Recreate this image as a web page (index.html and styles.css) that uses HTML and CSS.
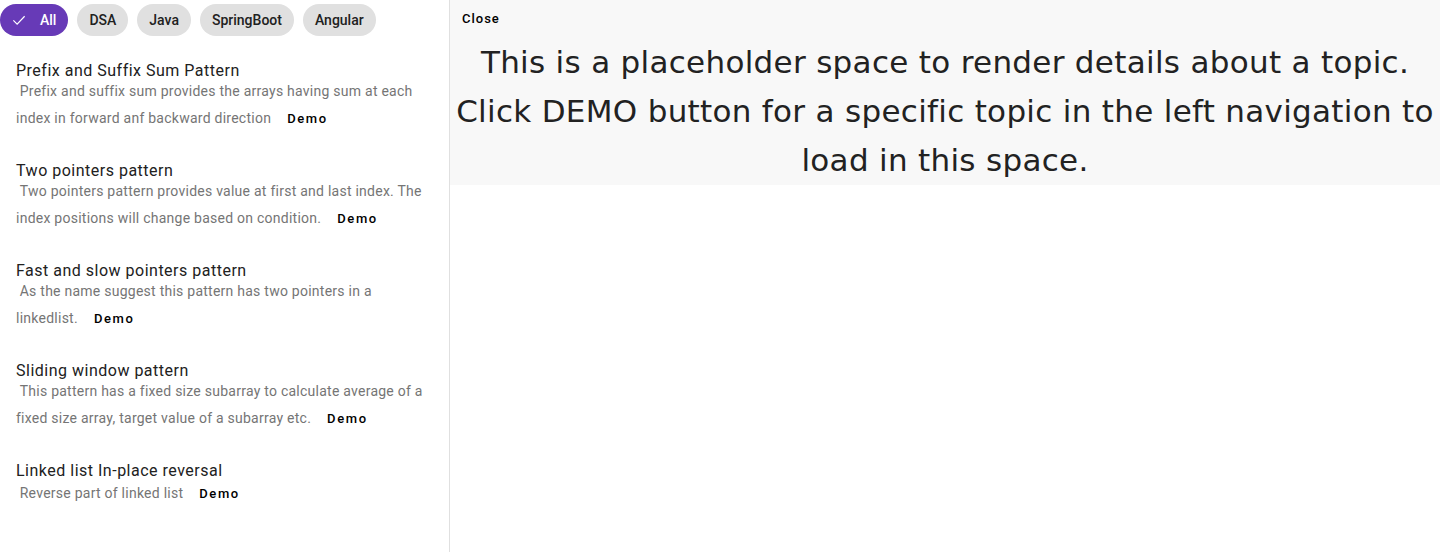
FILE: index.html
```html
<!DOCTYPE html>
<html>
<head>
<meta charset="utf-8">
<link rel="stylesheet" href="styles.css">
</head>
<body>
<div class="app">
  <aside class="sidebar">
    <div class="chips">
      <span class="chip chip-selected"><svg class="check" width="18" height="18" viewBox="0 0 24 24"><path d="M4.5 12.5l5 5 10-10.5" fill="none" stroke="#fff" stroke-width="1.6"/></svg>All</span>
      <span class="chip">DSA</span>
      <span class="chip">Java</span>
      <span class="chip">SpringBoot</span>
      <span class="chip">Angular</span>
    </div>
    <ul class="topics">
      <li class="topic">
        <div class="topic-title">Prefix and Suffix Sum Pattern</div>
        <div class="topic-desc"><span class="desc-text">&nbsp;Prefix and suffix sum provides the arrays having sum at each index in forward anf backward direction</span><button class="demo">Demo</button></div>
      </li>
      <li class="topic">
        <div class="topic-title">Two pointers pattern</div>
        <div class="topic-desc"><span class="desc-text">&nbsp;Two pointers pattern provides value at first and last index. The index positions will change based on condition.</span><button class="demo">Demo</button></div>
      </li>
      <li class="topic">
        <div class="topic-title">Fast and slow pointers pattern</div>
        <div class="topic-desc"><span class="desc-text">&nbsp;As the name suggest this pattern has two pointers in a linkedlist.</span><button class="demo">Demo</button></div>
      </li>
      <li class="topic">
        <div class="topic-title">Sliding window pattern</div>
        <div class="topic-desc"><span class="desc-text">&nbsp;This pattern has a fixed size subarray to calculate average of a fixed size array, target value of a subarray etc.</span><button class="demo">Demo</button></div>
      </li>
      <li class="topic">
        <div class="topic-title">Linked list In-place reversal</div>
        <div class="topic-desc topic-desc-single"><span class="desc-text">&nbsp;Reverse part of linked list</span><button class="demo">Demo</button></div>
      </li>
    </ul>
  </aside>
  <main class="detail">
    <div class="detail-box">
      <button class="close">Close</button>
      <p class="placeholder">This is a placeholder space to render details about a topic. Click DEMO button for a specific topic in the left navigation to load in this space.</p>
    </div>
  </main>
</div>
</body>
</html>
```
FILE: styles.css
```css
html, body {
  margin: 0;
  padding: 0;
  background: #fff;
  font-family: Roboto, "Liberation Sans", sans-serif;
}
.app {
  display: flex;
  height: 552px;
}
.sidebar {
  width: 449px;
  flex: none;
  border-right: 1px solid #e0e0e0;
  box-sizing: content-box;
}
.chips {
  display: flex;
  gap: 9px;
  padding: 4px 0;
}
.chip {
  display: inline-flex;
  align-items: center;
  height: 32px;
  padding: 0 12px;
  border-radius: 16px;
  background: #e0e0e0;
  color: #212121;
  font-size: 14px;
  font-weight: 500;
  box-sizing: border-box;
}
.chip-selected {
  background: #673ab7;
  color: #fff;
  padding-left: 10px;
}
.check {
  margin-right: 12px;
}
.topics {
  list-style: none;
  margin: 0;
  padding: 21px 16px 0 16px;
}
.topic {
  margin-bottom: 29px;
}
.topic-title {
  font-size: 16px;
  line-height: 20px;
  letter-spacing: 0.5px;
  color: #212121;
}
.topic-desc {
  margin-top: -3px;
  font-size: 14px;
  line-height: 27px;
  letter-spacing: 0.25px;
  color: #757575;
}
.topic-desc-single {
  margin-top: -1px;
}
.demo {
  border: none;
  background: none;
  padding: 0;
  margin-left: 16px;
  font-family: Roboto, "Liberation Sans", sans-serif;
  font-size: 13px;
  font-weight: 500;
  letter-spacing: 1.6px;
  line-height: 16px;
  color: #000;
}
.detail {
  flex: 1;
}
.detail-box {
  background: #f8f8f8;
}
.close {
  display: block;
  height: 37px;
  border: none;
  background: none;
  padding: 0 12px;
  font-family: Roboto, "Liberation Sans", sans-serif;
  font-size: 13px;
  font-weight: 500;
  letter-spacing: 1px;
  color: #000;
}
.placeholder {
  margin: 0;
  text-align: center;
  font-family: "DejaVu Sans", Verdana, sans-serif;
  font-size: 31px;
  line-height: 49px;
  letter-spacing: 0.3px;
  color: #222;
  padding-top: 1px;
}
```
